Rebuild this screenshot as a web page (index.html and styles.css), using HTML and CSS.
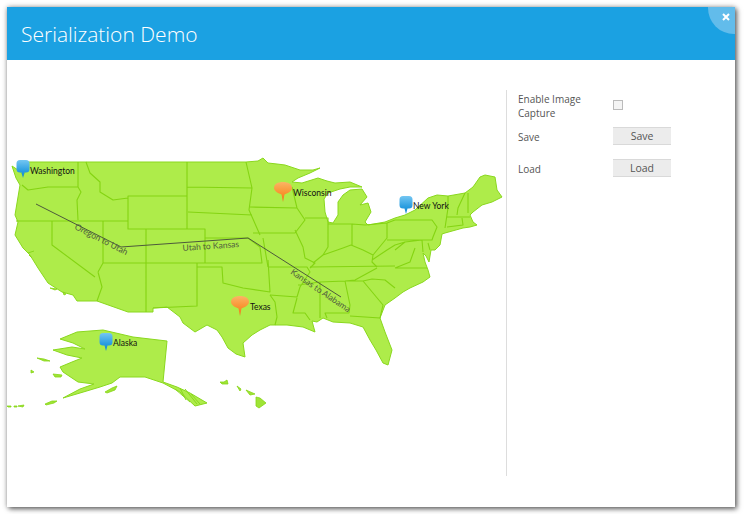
FILE: index.html
```html
<!DOCTYPE html>
<html lang="en">
<head>
  <meta charset="UTF-8" />
  <title>Serialization Demo</title>
  <link rel="stylesheet" href="styles.css">
</head>
<body>

<div class="window">
  <div class="header">
    <h1>Serialization Demo</h1>
    <div class="close-corner"></div>
    <svg class="close-x" width="8" height="8" viewBox="0 0 8 8"><path d="M1 1L7 7M7 1L1 7" /></svg>
  </div>

  <div class="content">
    <div class="map-pane">
      <svg class="map" width="499" height="386" viewBox="7 90 499 386">
        <defs>
          <linearGradient id="blue" x1="0" y1="0" x2="0" y2="1">
            <stop offset="0" stop-color="#74c6f2" />
            <stop offset="0.6" stop-color="#2a9de0" />
            <stop offset="1" stop-color="#0f84cd" />
          </linearGradient>
          <linearGradient id="orange" x1="0" y1="0" x2="0" y2="1">
            <stop offset="0" stop-color="#fbb565" />
            <stop offset="0.6" stop-color="#f8902c" />
            <stop offset="1" stop-color="#ef6f1a" />
          </linearGradient>
          <g id="pin-blue">
            <path d="M-3 -18H3Q6.500 -18 6.500 -14.500V-9Q6.500 -5.500 3 -5.500H1.500L0 0L-1.500 -5.500H-3Q-6.500 -5.500 -6.500 -9V-14.500Q-6.500 -18 -3 -18Z" fill="url(#blue)" />
          </g>
          <g id="pin-orange">
            <path d="M-9 -14C-9 -18 -5 -20 0 -20S9 -18 9 -14C9 -10.500 4 -8.500 1.500 -7.500L0 0L-1.500 -7.500C-4 -8.500 -9 -10.500 -9 -14Z" fill="url(#orange)" />
          </g>
        </defs>

        <!-- lower 48 -->
        <path class="land" d="M12 166L18 170L21 172L23 176L26 170L27 162L86 162H187L246 162L258 161L263 158L268 163L277 164L285 165L300 170L313 170L320 168L310 173L298 178L292 182L302 183L318 178L327 181L335 183L350 182L362 187L350 187L340 189L328 193L324 199L325 212L328 222L333 223L338 215L338 202L343 195L350 190L362 189L367 197L360 205L368 203L371 212L365 222L368 225L385 222L395 218L405 215L415 210L428 198L437 195L448 196L465 193L473 187L480 177L485 175L495 177L497 190L502 197L492 202L482 205L473 212L470 215L473 222L477 225L470 227L463 228L445 233L442 234L440 245L435 250L431 250L429 262L426 256L423 253L425 262L428 270L430 277L423 282L410 288L403 292L395 298L385 305L380 318L385 332L392 350L388 365L383 363L376 350L370 340L363 327L350 323L333 322L323 318L317 322L312 321L315 332L303 327L287 325L270 325L260 330L252 335L243 343L245 357L236 354L228 348L222 337L217 330L207 325L195 332L183 323L180 317L167 307L153 308L153 312L128 312L97 301L77 301L73 295L62 292L48 283L38 268L30 255L23 248L15 235L18 222L15 215L20 185L16 178Z" />
        <path class="coast" d="M28 253L34 251M29 255L32 258" />

        <!-- state lines -->
        <path class="state" d="M78 162V187M22 185L28 190L48 187H78L81 192L77 200L78 220M16 221H128M52 221V245L95 277M86 162L90 173L100 182L100 192L113 200L128 198M128 196H187V229H128ZM103 221V263H146M128 221V229M98 272L103 263M98 272L102 287L97 301M146 229H205V263H146ZM146 263V312M187 162V196M187 187L252 188M188 212L252 215M246 162L252 188L249 210L260 235M205 229V238H248L260 247L262 263H205M197 263V306L153 308M197 267H222L223 283L243 288L270 292L268 260M270 295L275 302L277 317L275 325"/>
        <path class="state" d="M268 267H307L310 272L300 287L297 297L270 295M298 285L320 282L345 281L355 280L377 268M297 298L293 313H305L310 320M320 282V318M345 281L350 305L349 313H325L327 318M345 281H363L383 305L380 318L350 316M363 281L372 279L385 280L395 288M310 267L395 266"/>
        <path class="state" d="M250 207L297 208M292 187L297 208L305 220L295 233H253M263 238L268 267M295 230L303 247L305 258L315 263L310 268M305 218H328V247L323 255L313 263M328 224H352V245M323 255L343 248L351 245L363 250L373 255L372 262L377 267M352 224L365 225L387 223V238L373 255M372 260L387 250L395 245L405 242L422 240L423 252M395 250L405 242M415 248L410 262L395 268M395 268H427M395 220H432L437 227L433 237L432 240H395M387 223L395 220M387 240H395M448 196V208L445 228M465 193L458 208L457 215M468 193V213M447 217H470M447 227L463 225L462 218M428 243L430 250"/>

        <!-- alaska, islands, hawaii -->
        <path class="land" d="M60 339L77 332L103 330L133 337L167 341L163 382L177 387L190 393L207 403L195 406L180 392L163 383L145 377L133 377L120 377L112 383L100 387L80 393L63 398L80 389L94 384L78 382L63 372L60 367L72 362L82 358L67 355L53 350L72 347L85 349L73 343Z" />
        <path class="coast" d="M180 388L186 400M185 389L197 404M191 394L200 404M175 389L190 402" />
        <path class="island" d="M37 358L44 359L50 361L44 361ZM53 374L62 375L61 377L55 377ZM31 370L34 372L31 373ZM45 404L52 401L57 401L54 403L46 405ZM7 406H11V407H8ZM14 406L17 406V407L14 407ZM18 406L24 405L23 407ZM105 392L112 388L117 386L115 390L107 393ZM50 288L57 289L55 290ZM63 292L66 294L64 295ZM220 382L224 382L227 380L228 384L222 384ZM237 386L241 389L240 391ZM246 390L255 394L250 395ZM256 397L260 398L266 403L259 408L256 406Z" />

        <!-- routes -->
        <path class="route" d="M36 204L121 247L248 238L341 297" />
        <text class="route-label" transform="translate(100 242) rotate(27)" text-anchor="middle">Oregon to Utah</text>
        <text class="route-label" transform="translate(211 249) rotate(-4)" text-anchor="middle">Utah to Kansas</text>
        <text class="route-label" transform="translate(319 293) rotate(34)" text-anchor="middle">Kansas to Alabama</text>

        <!-- pins -->
        <use href="#pin-blue" x="23" y="178" />
        <text class="pin-label" x="30" y="174">Washington</text>
        <use href="#pin-orange" x="283" y="202" />
        <text class="pin-label" x="293" y="196">Wisconsin</text>
        <use href="#pin-blue" x="406" y="214" />
        <text class="pin-label" x="413" y="209">New York</text>
        <use href="#pin-orange" x="240" y="316" />
        <text class="pin-label" x="250" y="310">Texas</text>
        <use href="#pin-blue" x="106" y="351" />
        <text class="pin-label" x="113" y="346">Alaska</text>
      </svg>
    </div>

    <div class="side">
      <label class="row-label first">Enable Image Capture</label>
      <div class="row-field first"><input type="checkbox" class="check"></div>
      <label class="row-label">Save</label>
      <div class="row-field"><button class="btn">Save</button></div>
      <label class="row-label">Load</label>
      <div class="row-field"><button class="btn">Load</button></div>
    </div>
  </div>
</div>

</body>
</html>
```

FILE: styles.css
```css
* { margin: 0; padding: 0; box-sizing: border-box; }

body {
  font-family: 'Open Sans', 'Liberation Sans', sans-serif;
  background: #fff;
  padding: 7px;
  color: #444;
}

.window {
  width: 728px;
  height: 500px;
  background: #fff;
  box-shadow: 2px 2px 5px rgba(0,0,0,0.55), 0 0 5px rgba(0,0,0,0.3);
}

.header {
  position: relative;
  height: 53px;
  background: #1ba1e2;
  overflow: hidden;
  padding: 13px 14px;
}

h1 {
  font-size: 21px;
  font-weight: 300;
  line-height: 28px;
  color: #fff;
}

.close-corner {
  position: absolute;
  top: -25px;
  right: -25px;
  width: 52px;
  height: 52px;
  border-radius: 50%;
  background: #62bceb;
}

.close-x {
  position: absolute;
  top: 6px;
  right: 5px;
  fill: none;
  stroke: #fff;
  stroke-width: 2;
}

.content {
  display: flex;
  padding-top: 30px;
}

.map-pane {
  width: 499px;
  height: 386px;
}

.map {
  display: block;
  overflow: visible;
}

.land {
  fill: #aeec4a;
  stroke: #8ad81e;
  stroke-width: 1;
  stroke-linejoin: round;
}

.coast {
  fill: none;
  stroke: #8ad81e;
  stroke-width: 1;
}

.island {
  fill: #9fe436;
  stroke: #86d514;
  stroke-width: 0.8;
  stroke-linejoin: round;
}

.state {
  fill: none;
  stroke: #84d412;
  stroke-width: 1.1;
  stroke-linejoin: round;
}

.route {
  fill: none;
  stroke: #4d5a3c;
  stroke-width: 1;
}

.route-label {
  font-family: Lato, 'Open Sans', sans-serif;
  font-size: 8.5px;
  fill: #4f5c3e;
}

.pin-label {
  font-family: Lato, 'Open Sans', sans-serif;
  font-size: 8.5px;
  fill: #111;
}

.side {
  flex: 1;
  height: 386px;
  border-left: 1px solid #ddd;
  padding: 2px 0 0 11px;
  display: grid;
  grid-template-columns: 95px 58px;
  grid-auto-rows: min-content;
  font-size: 10px;
  line-height: 14px;
}

.row-label {
  color: #555;
  align-self: center;
  padding: 2px 25px 0 0;
  margin-bottom: 14px;
}

.row-field {
  align-self: center;
  margin-bottom: 14px;
}

.row-label.first {
  padding-top: 0;
  margin-bottom: 7px;
}

.row-field.first {
  margin-bottom: 9px;
}

.check {
  display: block;
  appearance: none;
  width: 10px;
  height: 10px;
  border: 1px solid #bbb;
  background: #f4f4f4;
}

.btn {
  display: block;
  width: 58px;
  height: 18px;
  background: #ececec;
  border: none;
  border-top: 1px solid #d9d9d9;
  border-bottom: 1px solid #d9d9d9;
  font-family: inherit;
  font-size: 10.5px;
  color: #555;
}
```
